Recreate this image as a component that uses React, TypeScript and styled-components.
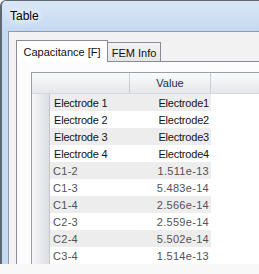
import React from 'react';
import styled, { createGlobalStyle } from 'styled-components';

interface GridRow {
  name: string;
  value: string;
  kind: 'electrode' | 'coupling';
}

const rows: GridRow[] = [
  { name: 'Electrode 1', value: 'Electrode1', kind: 'electrode' },
  { name: 'Electrode 2', value: 'Electrode2', kind: 'electrode' },
  { name: 'Electrode 3', value: 'Electrode3', kind: 'electrode' },
  { name: 'Electrode 4', value: 'Electrode4', kind: 'electrode' },
  { name: 'C1-2', value: '1.511e-13', kind: 'coupling' },
  { name: 'C1-3', value: '5.483e-14', kind: 'coupling' },
  { name: 'C1-4', value: '2.566e-14', kind: 'coupling' },
  { name: 'C2-3', value: '2.559e-14', kind: 'coupling' },
  { name: 'C2-4', value: '5.502e-14', kind: 'coupling' },
  { name: 'C3-4', value: '1.514e-13', kind: 'coupling' },
];

const GlobalStyle = createGlobalStyle`
  html, body {
    margin: 0;
    padding: 0;
    overflow: hidden;
    background: #f8f8f8;
  }
  body {
    font-family: "Liberation Sans", Arial, sans-serif;
    font-size: 11px;
  }
`;

const Window = styled.div`
  box-sizing: border-box;
  display: flex;
  flex-direction: column;
  width: 100%;
  height: 264px;
  overflow: hidden;
  border-left: 2px solid #5d6873;
  border-top: 1px solid #5d6873;
  border-top-left-radius: 6px;
  background: #c4d9f2;
`;

const TitleBar = styled.div`
  display: flex;
  align-items: center;
  height: 30px;
  padding-left: 8px;
  background: linear-gradient(to bottom, #d9e7f7, #c4d9f2);
  font-size: 12px;
  color: #000;
  text-shadow: 0 0 6px #fff, 0 0 10px #fff, 0 0 14px #fff;
`;

const Client = styled.div`
  flex: 1;
  display: flex;
  flex-direction: column;
  min-width: 0;
  margin-left: 6px;
  padding: 8px 0 0 7px;
  border-left: 1px solid #8a9bb0;
  border-top: 1px solid #8a9bb0;
  background: #f2f2f2;
`;

const TabStrip = styled.div`
  display: flex;
  align-items: flex-end;
  height: 21px;
`;

const Tab = styled.div<{ active?: boolean }>`
  box-sizing: border-box;
  display: flex;
  align-items: center;
  justify-content: center;
  width: ${p => (p.active ? '92px' : '53px')};
  height: ${p => (p.active ? '22px' : '19px')};
  margin-bottom: ${p => (p.active ? '-1px' : '0')};
  position: relative;
  z-index: ${p => (p.active ? 1 : 0)};
  border: 1px solid #898c95;
  border-bottom: none;
  border-left: ${p => (p.active ? '1px solid #898c95' : 'none')};
  background: ${p => (p.active ? '#ffffff' : 'linear-gradient(to bottom, #f3f3f3, #e6e6e6)')};
  color: #111;
  padding-top: ${p => (p.active ? '0' : '1px')};
  white-space: nowrap;
`;

const TabPage = styled.div`
  flex: 1;
  display: flex;
  flex-direction: column;
  min-width: 0;
  padding: 10px 0 0 14px;
  border-left: 1px solid #898c95;
  border-top: 1px solid #898c95;
  background: #fcfcfc;
`;

const Grid = styled.div`
  flex: 1;
  display: flex;
  flex-direction: column;
  min-width: 0;
  border-left: 1px solid #9a9ea6;
  border-top: 1px solid #9a9ea6;
  background: #ffffff;
`;

const HeaderRow = styled.div`
  display: flex;
  height: 20px;
  border-bottom: 1px solid #d5d8de;
  background: linear-gradient(to bottom, #fbfbfc 0%, #f1f2f4 45%, #e4e7eb 100%);
`;

const HeaderCell = styled.div<{ width?: number }>`
  box-sizing: border-box;
  display: flex;
  align-items: center;
  justify-content: center;
  width: ${p => (p.width ? `${p.width}px` : 'auto')};
  flex: ${p => (p.width ? 'none' : '1')};
  border-right: ${p => (p.width ? '1px solid #c9ccd3' : 'none')};
  color: #1e2d40;
`;

const Row = styled.div<{ shaded: boolean }>`
  display: flex;
  height: 17px;
  background: ${p => (p.shaded ? '#ededed' : '#ffffff')};
`;

const RowHeader = styled.div`
  box-sizing: border-box;
  flex: none;
  width: 18px;
  border-right: 1px solid #c4c7cd;
  background: linear-gradient(to right, #f7f7f8, #dcdee3);
`;

const Cell = styled.div<{ width: number; kind: GridRow['kind']; align: 'left' | 'right' }>`
  box-sizing: border-box;
  flex: none;
  display: flex;
  align-items: center;
  justify-content: ${p => (p.align === 'right' ? 'flex-end' : 'flex-start')};
  width: ${p => p.width}px;
  padding: ${p => (p.align === 'right' ? '0 2px 0 0' : p.kind === 'electrode' ? '0 0 0 4px' : '0 0 0 3px')};
  color: ${p => (p.kind === 'electrode' ? '#141414' : '#525252')};
  letter-spacing: ${p => (p.kind === 'electrode' ? '-0.2px' : '0.3px')};
  white-space: nowrap;
`;

const Filler = styled.div`
  flex: 1;
  background: #ffffff;
`;

export default function App() {
  return (
    <>
      <GlobalStyle />
      <Window>
        <TitleBar>Table</TitleBar>
        <Client>
          <TabStrip>
            <Tab active>Capacitance [F]</Tab>
            <Tab>FEM Info</Tab>
          </TabStrip>
          <TabPage>
            <Grid>
              <HeaderRow>
                <HeaderCell width={98} />
                <HeaderCell width={81}>Value</HeaderCell>
                <HeaderCell />
              </HeaderRow>
              {rows.map((row, index) => (
                <Row key={row.name} shaded={index % 2 === 0}>
                  <RowHeader />
                  <Cell width={80} kind={row.kind} align="left">
                    {row.name}
                  </Cell>
                  <Cell width={81} kind={row.kind} align="right">
                    {row.value}
                  </Cell>
                  <Filler />
                </Row>
              ))}
            </Grid>
          </TabPage>
        </Client>
      </Window>
    </>
  );
}
